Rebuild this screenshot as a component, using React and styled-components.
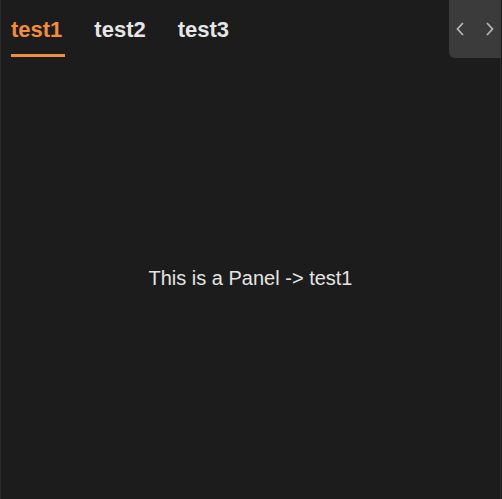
import React, { useState } from "react";
import styled, { createGlobalStyle } from "styled-components";

const GlobalStyle = createGlobalStyle`
  html, body {
    margin: 0;
    padding: 0;
    background: #1c1c1c;
    font-family: "Liberation Sans", Arial, sans-serif;
  }
`;

const Frame = styled.div`
  width: 499px;
  height: 499px;
  border-left: 1px solid #2a2a2a;
  border-right: 1px solid #2a2a2a;
  background: #1c1c1c;
  display: flex;
  flex-direction: column;
`;

const TabBar = styled.div`
  display: flex;
  align-items: stretch;
  height: 58px;
  flex-shrink: 0;
`;

const TabList = styled.div`
  flex: 1;
  display: flex;
  gap: 28px;
  padding-left: 8px;
`;

const Tab = styled.button`
  position: relative;
  background: none;
  border: none;
  margin: 0;
  padding: 2px 2px 0;
  font-family: inherit;
  font-size: 22px;
  font-weight: bold;
  color: ${(p) => (p.$active ? "#f28c3e" : "#e6e6e6")};
  cursor: pointer;
  display: flex;
  align-items: center;

  &::after {
    content: "";
    display: ${(p) => (p.$active ? "block" : "none")};
    position: absolute;
    left: 2px;
    right: -1px;
    top: 54px;
    height: 3px;
    background: #f28c3e;
  }
`;

const Scroller = styled.div`
  width: 52px;
  margin-right: -1px;
  background: #3b3b3b;
  border-bottom-left-radius: 6px;
  display: flex;
  align-items: center;
  justify-content: center;
  gap: 10px;
`;

const Arrow = styled.button`
  background: none;
  border: none;
  padding: 0;
  width: 20px;
  height: 20px;
  display: flex;
  align-items: center;
  justify-content: center;
  cursor: pointer;
`;

const Panel = styled.div`
  flex: 1;
  display: flex;
  align-items: center;
  justify-content: center;
  color: #e4e4e4;
  font-size: 20px;
`;

const Chevron = ({ dir }) => (
  <svg width="10" height="14" viewBox="0 0 10 14">
    <path
      d={dir === "left" ? "M8 1 L2.5 7 L8 13" : "M2 1 L7.5 7 L2 13"}
      fill="none"
      stroke="#b4b4b4"
      strokeWidth="1.8"
    />
  </svg>
);

export default function App() {
  const tabs = ["test1", "test2", "test3"];
  const [active, setActive] = useState(0);

  return (
    <>
      <GlobalStyle />
      <Frame>
        <TabBar>
          <TabList>
            {tabs.map((t, i) => (
              <Tab key={t} $active={i === active} onClick={() => setActive(i)}>
                {t}
              </Tab>
            ))}
          </TabList>
          <Scroller>
            <Arrow onClick={() => setActive((a) => Math.max(0, a - 1))}>
              <Chevron dir="left" />
            </Arrow>
            <Arrow onClick={() => setActive((a) => Math.min(tabs.length - 1, a + 1))}>
              <Chevron dir="right" />
            </Arrow>
          </Scroller>
        </TabBar>
        <Panel>This is a Panel -&gt; {tabs[active]}</Panel>
      </Frame>
    </>
  );
}
